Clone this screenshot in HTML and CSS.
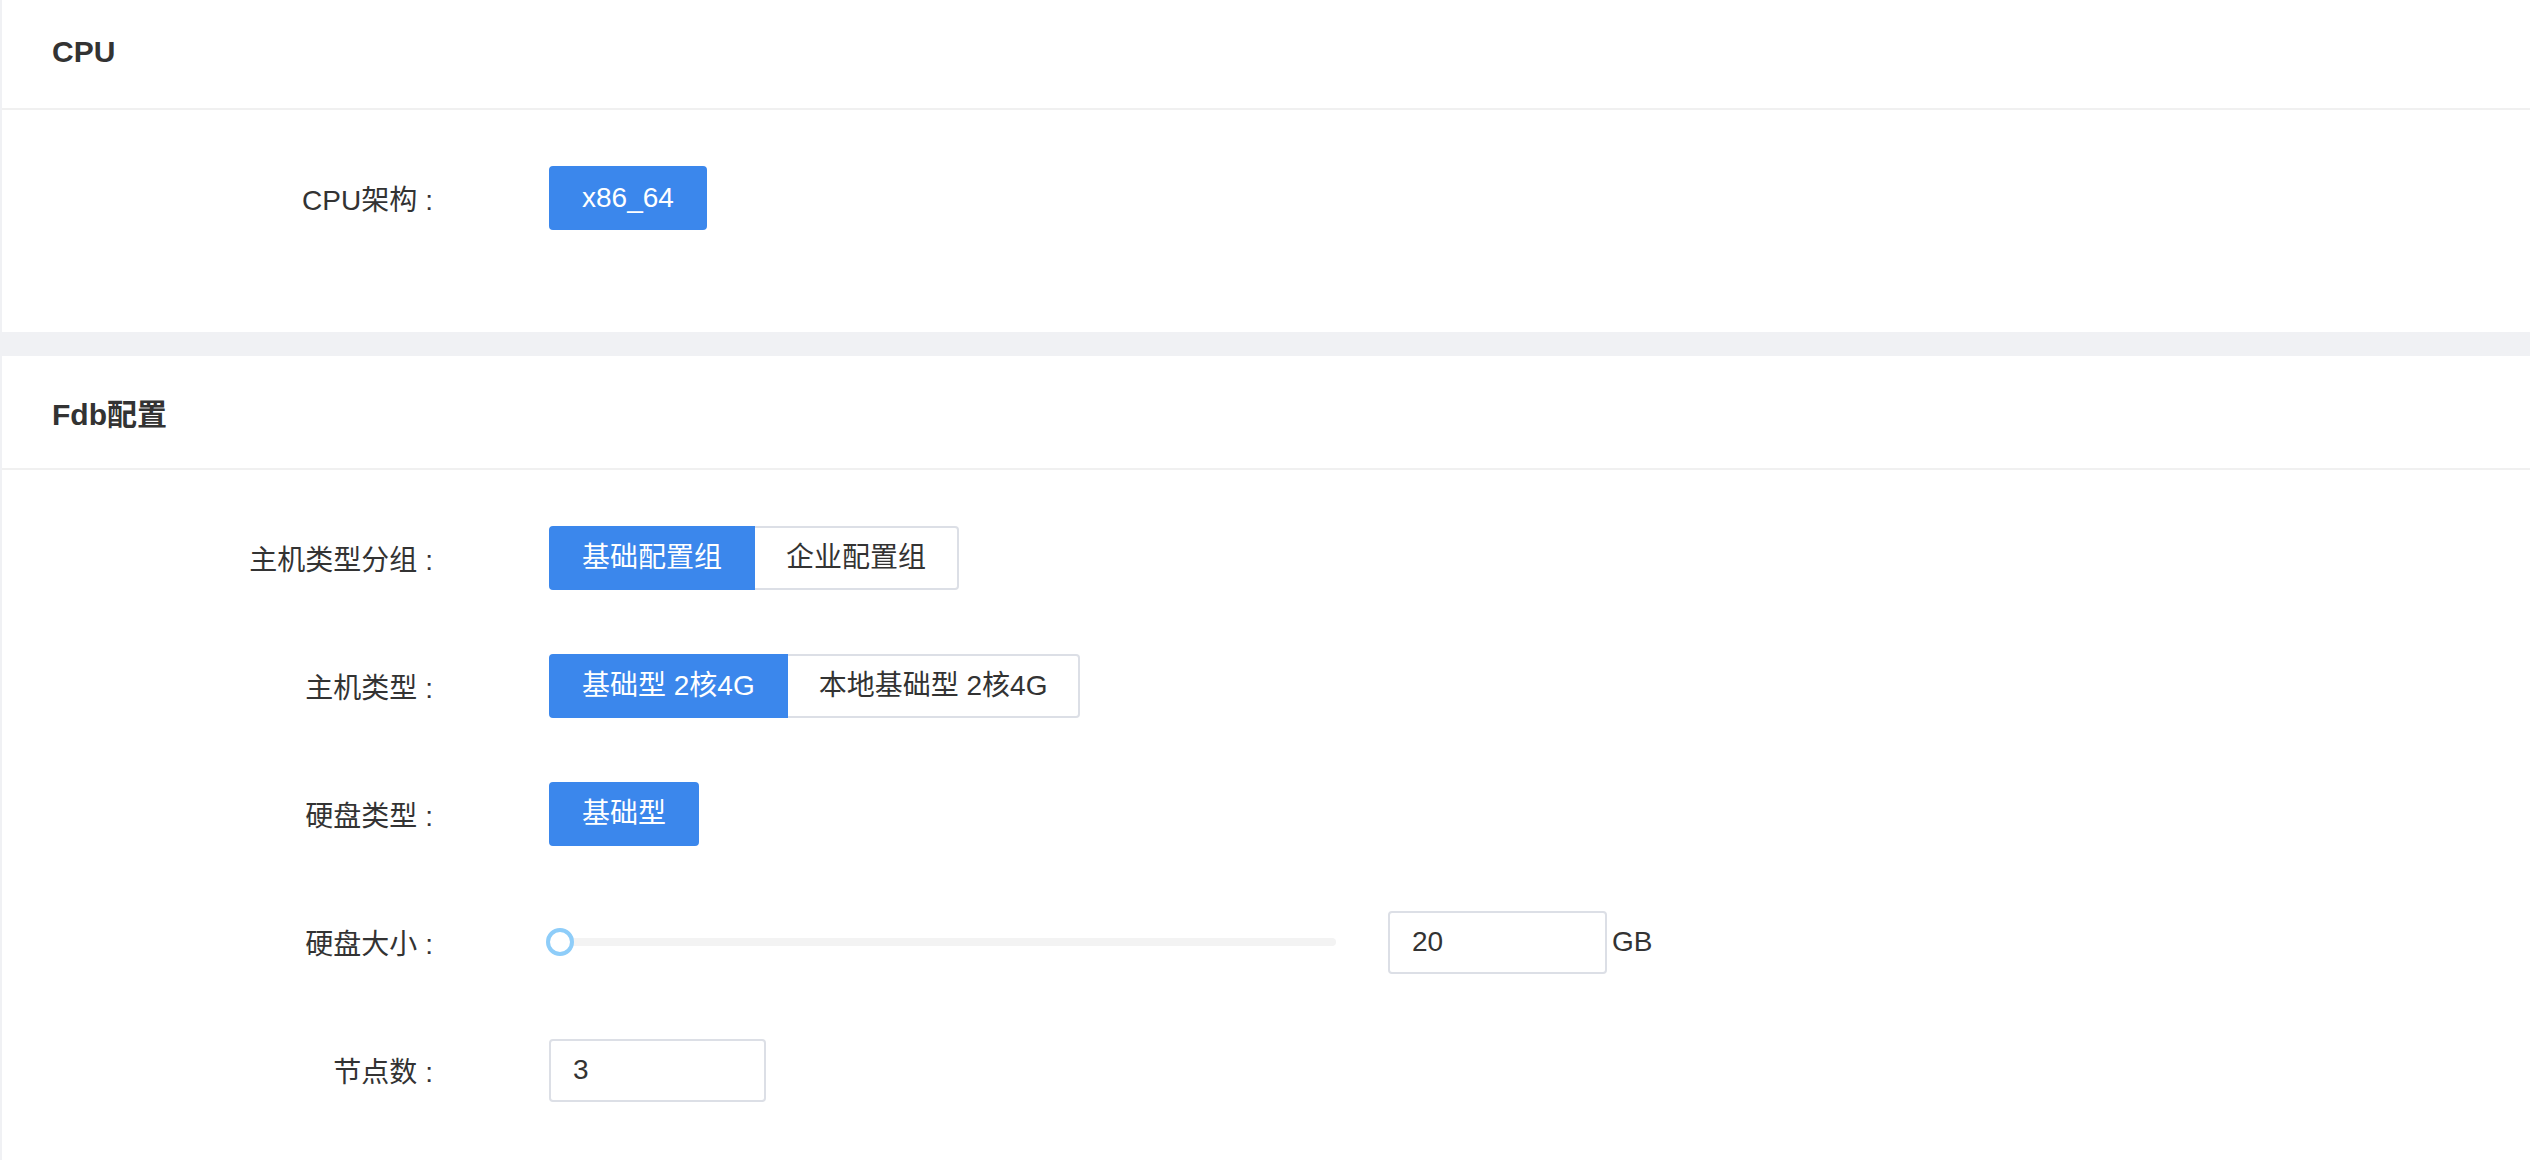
FILE: index.html
```html
<!DOCTYPE html>
<html lang="zh-CN">
<head>
    <meta charset="UTF-8">
    <meta name="viewport" content="width=device-width, initial-scale=1.0">
    <title>主机配置</title>
    <link rel="stylesheet" href="styles.css">
</head>
<body>
    <div class="page">
        <section class="card">
            <div class="card-header">CPU</div>
            <div class="card-body">
                <div class="form-item">
                    <label class="form-label">CPU架构</label>
                    <div class="form-content">
                        <button class="btn btn-active btn-single">x86_64</button>
                    </div>
                </div>
            </div>
        </section>

        <section class="card">
            <div class="card-header">Fdb配置</div>
            <div class="card-body">
                <div class="form-item">
                    <label class="form-label">主机类型分组</label>
                    <div class="form-content btn-group">
                        <button class="btn btn-active">基础配置组</button>
                        <button class="btn">企业配置组</button>
                    </div>
                </div>
                <div class="form-item">
                    <label class="form-label">主机类型</label>
                    <div class="form-content btn-group">
                        <button class="btn btn-active">基础型 2核4G</button>
                        <button class="btn">本地基础型 2核4G</button>
                    </div>
                </div>
                <div class="form-item">
                    <label class="form-label">硬盘类型</label>
                    <div class="form-content">
                        <button class="btn btn-active btn-single">基础型</button>
                    </div>
                </div>
                <div class="form-item">
                    <label class="form-label">硬盘大小</label>
                    <div class="form-content">
                        <div class="slider">
                            <span class="slider-handle"></span>
                        </div>
                        <input class="input" type="text" value="20">
                        <span class="unit">GB</span>
                    </div>
                </div>
                <div class="form-item">
                    <label class="form-label">节点数</label>
                    <div class="form-content">
                        <input class="input input-small" type="text" value="3">
                    </div>
                </div>
            </div>
        </section>
    </div>
</body>
</html>
```

FILE: styles.css
```css
body {
    margin: 0;
    background-color: #f0f1f4;
    font-family: "Liberation Sans", "Noto Sans CJK SC", sans-serif;
    color: #333;
    overflow: hidden;
}
.page {
    margin-top: -4px;
}
.card {
    margin-left: 2px;
    background-color: #fff;
}
.card + .card {
    margin-top: 24px;
}
.card-header {
    display: flex;
    align-items: center;
    height: 112px;
    padding-left: 50px;
    border-bottom: 2px solid #f0f0f0;
    font-size: 30px;
    font-weight: 700;
    color: #333;
}
.card-body {
    padding: 56px 0 38px;
}
.form-item {
    display: flex;
    align-items: center;
    height: 64px;
    margin-bottom: 64px;
}
.form-label {
    width: 431px;
    margin-right: 116px;
    text-align: right;
    font-size: 28px;
    color: #333;
}
.form-label::after {
    content: ":";
    margin-left: 8px;
}
.form-content {
    display: flex;
    align-items: center;
}
.btn {
    display: flex;
    align-items: center;
    height: 64px;
    padding: 0 31px;
    margin: 0;
    box-sizing: border-box;
    border: 2px solid #dcdfe6;
    background-color: #fff;
    color: #333;
    font-family: inherit;
    font-size: 28px;
    line-height: 1;
    cursor: pointer;
}
.btn-active {
    background-color: #3b87ec;
    border-color: #3b87ec;
    color: #fff;
}
.btn-single {
    border-radius: 4px;
}
.btn-group .btn:first-child {
    border-radius: 4px 0 0 4px;
}
.btn-group .btn:last-child {
    border-radius: 0 4px 4px 0;
    border-left: none;
}
.slider {
    position: relative;
    width: 787px;
    height: 8px;
    margin-right: 52px;
    border-radius: 4px;
    background-color: #f3f3f3;
}
.slider-handle {
    position: absolute;
    left: -3px;
    top: -10px;
    width: 28px;
    height: 28px;
    box-sizing: border-box;
    border: 4px solid #8ecdf9;
    border-radius: 50%;
    background-color: #fff;
}
.input {
    width: 219px;
    height: 63px;
    box-sizing: border-box;
    padding: 0 22px;
    border: 2px solid #dcdfe6;
    border-radius: 4px;
    font-family: inherit;
    font-size: 28px;
    color: #333;
    outline: none;
}
.input-small {
    width: 217px;
}
.unit {
    margin-left: 5px;
    font-size: 28px;
    color: #333;
}
```
